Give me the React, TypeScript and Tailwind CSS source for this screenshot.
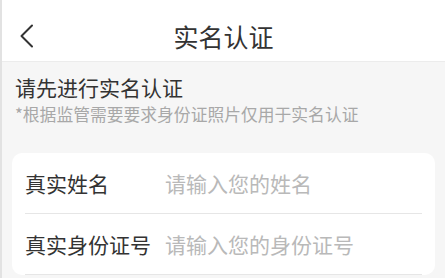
import * as React from "react"

const font = { fontFamily: '"Noto Sans CJK SC", "Noto Sans", sans-serif' }

function BackIcon() {
  return (
    <svg width="16" height="24" viewBox="0 0 16 24" fill="none" className="shrink-0">
      <polyline
        points="13,1.5 2.5,12 13,22.5"
        stroke="#333333"
        strokeWidth="2"
        strokeLinecap="round"
        strokeLinejoin="round"
      />
    </svg>
  )
}

function FieldRow({ label, placeholder }: { label: string; placeholder: string }) {
  return (
    <div className="flex h-[61px] items-center border-b border-[#e6e6e6]">
      <span className="w-[140px] shrink-0 text-[21px] leading-[28px] text-[#333333]">{label}</span>
      <input
        className="min-w-0 flex-1 bg-transparent text-[21px] leading-[28px] text-[#333333] outline-none placeholder:text-[#b9b9b9]"
        style={font}
        placeholder={placeholder}
      />
    </div>
  )
}

export default function App() {
  return (
    <div
      className="h-[278px] w-[445px] overflow-hidden border-l-2 border-[#e2e2e2] bg-[#f6f6f6]"
      style={font}
    >
      {/* Header */}
      <div className="h-[62px] border-b border-[#ececec] bg-white pt-[10px]">
        <div className="grid h-[51px] grid-cols-[1fr_auto_1fr] items-center">
          <div className="justify-self-start pl-[17px]">
            <BackIcon />
          </div>
          <div className="text-[25px] leading-[32px] text-[#333333]">实名认证</div>
          <div />
        </div>
      </div>

      {/* Intro */}
      <div className="px-[13px] pt-[11px]">
        <div className="text-[21px] leading-[28px] text-[#333333]">请先进行实名认证</div>
        <div className="mt-[2px] text-[16.8px] leading-[22px] text-[#a8a8a8]">
          *根据监管需要要求身份证照片仅用于实名认证
        </div>
      </div>

      {/* Form card */}
      <div className="mx-[10px] mt-[28px] rounded-[10px] bg-white px-[13px]">
        <FieldRow label="真实姓名" placeholder="请输入您的姓名" />
        <FieldRow label="真实身份证号" placeholder="请输入您的身份证号" />
      </div>
    </div>
  )
}
